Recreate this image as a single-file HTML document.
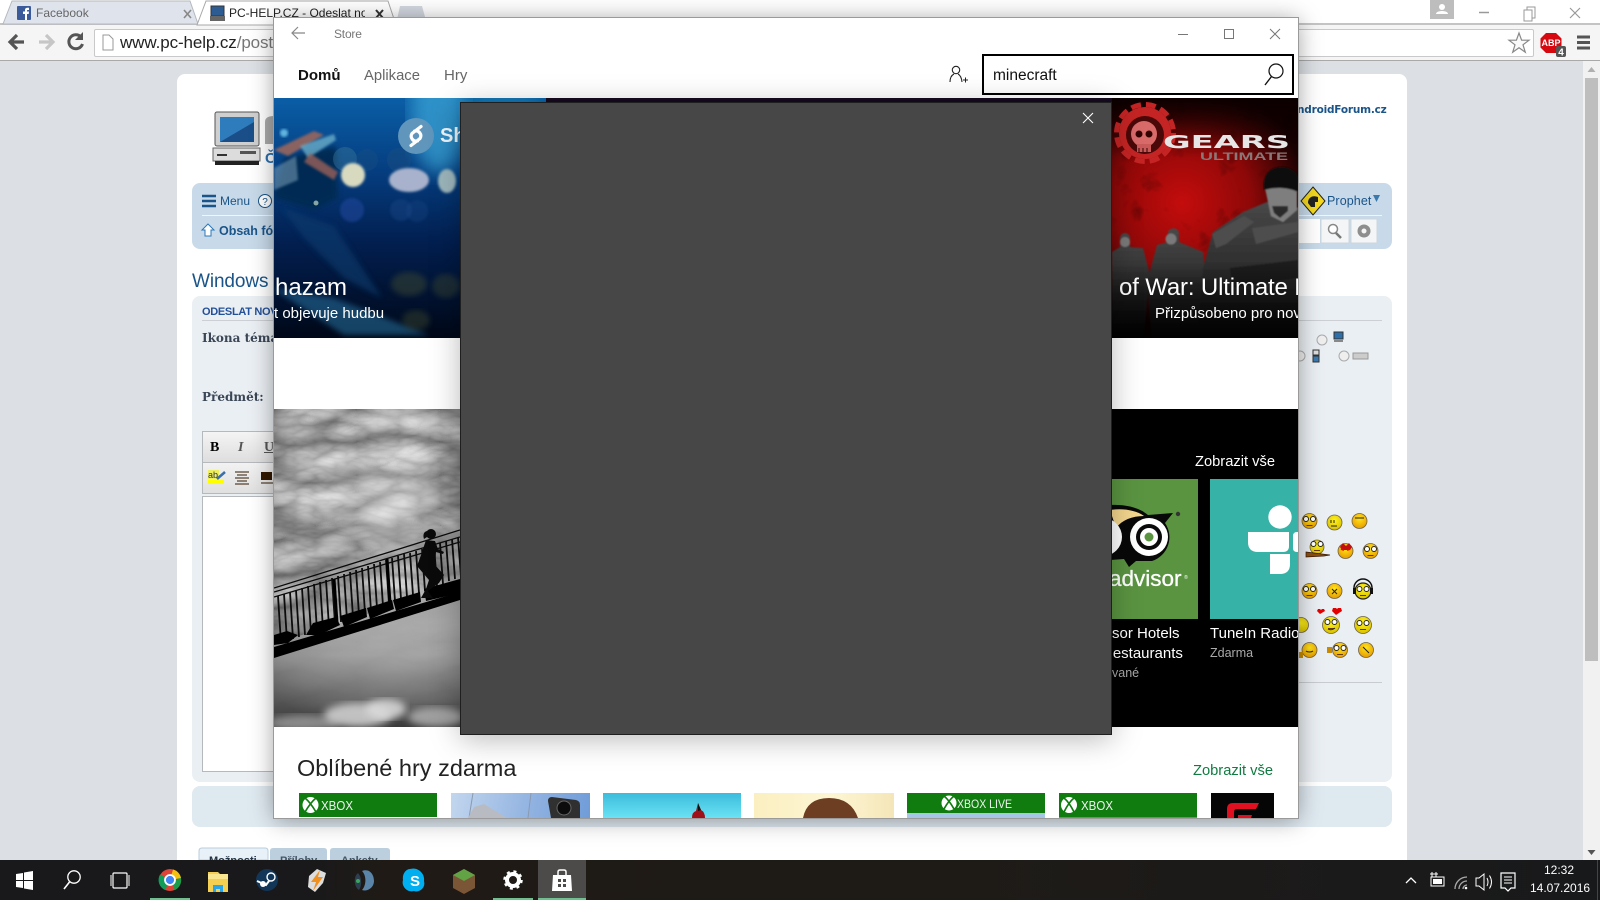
<!DOCTYPE html>
<html><head><meta charset="utf-8"><title>Store</title>
<style>
html,body{margin:0;padding:0;background:#dce0e4}
#r{position:relative;width:1600px;height:900px;overflow:hidden;background:#dce0e4;font-family:"Liberation Sans",sans-serif}
#r div,#r span.t{position:absolute}
.t{line-height:20px;white-space:nowrap}
svg{position:absolute;overflow:hidden}
.forum{color:#1a5488}
</style></head><body><div id="r">

<!-- chrome -->
<div style="left:0;top:0;width:1600px;height:24px;background:#fff"></div>
<div style="left:0;top:23px;width:1600px;height:2px;background:#c4c4c4"></div>
<div style="left:0;top:25px;width:1600px;height:35px;background:#f5f5f5"></div>
<div style="left:0;top:60px;width:1600px;height:1px;background:#a9a9a9"></div>
<svg style="left:0;top:0" width="440" height="26">
<path d="M3 24L12 1H190L198 24Z" fill="#dfe4ec" stroke="#b4b8be"/>
<path d="M197 25L206 1H388L396 25Z" fill="#fff" stroke="#a8a8a8"/>
<path d="M396 24L400 6H422L427 24Z" fill="#d3d8e0"/>
<rect x="17" y="6" width="14" height="14" rx="1" fill="#3b5a9a"/>
<path d="M25 20V14H23V11.500H25V10C25 8 26.500 7.500 29 7.800V10H27.500C27 10 27 10.500 27 11V11.500H29L28.700 14H27V20Z" fill="#fff"/>
<path d="M184 10l7 8M191 10l-7 8" stroke="#888" stroke-width="1.600"/>
<rect x="211" y="6" width="13" height="10" fill="#2c5c92" stroke="#333"/>
<rect x="210" y="16" width="15" height="5" fill="#666"/>
<path d="M376 10l7 8M383 10l-7 8" stroke="#333" stroke-width="2"/>
</svg>
<span class="t" style="left:36px;top:3px;font-size:12px;color:#666">Facebook</span>
<span class="t" style="left:229px;top:3px;font-size:12px;color:#222;width:136px;overflow:hidden">PC-HELP.CZ - Odeslat nov</span>

<svg style="left:1420px;top:0" width="180" height="24">
<rect x="10" y="0" width="24" height="19" fill="#bdbdbd"/>
<circle cx="22" cy="7" r="3" fill="#fff"/><path d="M16 14c0-4 12-4 12 0z" fill="#fff"/>
<path d="M59 12.500H69" stroke="#999" stroke-width="1.500"/>
<rect x="104" y="10" width="8" height="11" fill="none" stroke="#999"/><path d="M107 10V7H115V18H112" fill="none" stroke="#999"/>
<path d="M150 8l10 10M160 8l-10 10" stroke="#999" stroke-width="1.200"/>
</svg>
<div style="left:94px;top:29px;width:1438px;height:26px;background:#fff;border:1px solid #c9c9c9;border-radius:2px"></div>
<svg style="left:0;top:26px" width="125" height="32">
<path d="M24 16H11M17 9l-7 7 7 7" fill="none" stroke="#555" stroke-width="3.200"/>
<path d="M39 16H52M46 9l7 7-7 7" fill="none" stroke="#c6c6c6" stroke-width="3.200"/>
<path d="M81 11a7 7 0 1 0 1.500 7" fill="none" stroke="#555" stroke-width="3"/><path d="M83 6v8h-8z" fill="#555"/>
<path d="M103 9h6l4 4v11h-10z" fill="#fff" stroke="#999"/>
</svg>
<span class="t" style="left:120px;top:33px;font-size:17px;color:#222;letter-spacing:-.1px">www.pc-help.cz<span style="color:#777">/posti</span></span>
<svg style="left:1500px;top:28px" width="100" height="30">
<path d="M19 5l2.600 7.200H29l-6 4.600 2.300 7.400-6.300-4.500-6.300 4.500 2.300-7.400-6-4.600h7.400z" fill="#fafafa" stroke="#888" stroke-width="1.200"/>
<path d="M46 5h10l5.500 5.500v9L56 25H46l-5.500-5.500v-9z" fill="#d5090f"/>
<text x="51" y="18" font-family="Liberation Sans" font-size="9" font-weight="700" fill="#fff" text-anchor="middle">ABP</text>
<rect x="56" y="18" width="10" height="11" rx="2" fill="#555"/>
<text x="61" y="27.500" font-family="Liberation Sans" font-size="10" font-weight="700" fill="#fff" text-anchor="middle">4</text>
<path d="M77 9h13M77 14.500h13M77 20h13" stroke="#555" stroke-width="3"/>
</svg>

<!-- scrollbar -->
<div style="left:1583px;top:61px;width:17px;height:799px;background:#f1f1f1"></div>
<div style="left:1585px;top:78px;width:13px;height:583px;background:#bebebe"></div>
<svg style="left:1583px;top:61px" width="17" height="799">
<path d="M8.500 6l4 5h-8z" fill="#b0b0b0"/><path d="M4.500 789h8l-4 5z" fill="#555"/></svg>

<!-- forum -->
<div style="left:177px;top:74px;width:1230px;height:800px;background:#fff;border-radius:8px 8px 0 0"></div>
<svg style="left:212px;top:110px" width="62" height="56">
<rect x="3" y="2" width="44" height="34" rx="2" fill="#cfcfcf" stroke="#555"/>
<rect x="8" y="7" width="34" height="25" fill="#2f7cbc"/><path d="M8 32L42 12V32Z" fill="#1a4e88"/>
<rect x="1" y="38" width="47" height="13" fill="#dcdcdc" stroke="#666"/>
<rect x="3" y="51" width="44" height="4" fill="#222"/>
<rect x="5" y="44" width="10" height="2" fill="#333"/><rect x="28" y="41" width="16" height="3" fill="#555"/>
<path d="M53 34V12q0-6 9-6v28z" fill="#aaa"/>
<text x="53" y="53" font-family="Liberation Sans" font-size="15" font-weight="700" fill="#2a6fb0">Č</text>
</svg>
<div class="t forum" style="left:1297px;top:100px;font-size:10.500px;font-weight:700;font-family:'DejaVu Sans',sans-serif;letter-spacing:-.2px">ndroidForum.cz</div>

<div style="left:192px;top:183px;width:1200px;height:66px;background:#c8dae9;border-radius:8px"></div>
<div style="left:202px;top:215px;width:1180px;height:1px;background:#f2f6f9"></div>
<svg style="left:200px;top:190px" width="90" height="55">
<path d="M2 6h14M2 11h14M2 16h14" stroke="#1a5488" stroke-width="2.400"/>
<circle cx="65" cy="11" r="6.500" fill="#fff" stroke="#1a5488"/><text x="65" y="15" text-anchor="middle" font-size="10" fill="#1a5488" font-family="Liberation Sans">?</text>
<path d="M8 34l6 6h-3v6H5v-6H2z" fill="#fff" stroke="#2a78b8"/>
</svg>
<span class="t forum" style="left:220px;top:191px;font-size:12px">Menu</span>
<span class="t forum" style="left:219px;top:221px;font-size:12.500px;font-weight:700">Obsah fó</span>
<svg style="left:1300px;top:186px" width="90" height="60">
<path d="M13 1l12 14-12 14L1 15z" fill="#f4d820" stroke="#222"/>
<path d="M8 17c0-6 5-8 10-6v5h-3v5h-4z" fill="#222"/>
<path d="M73 9h7l-3.500 7z" fill="#3b78ad"/>
<rect x="21" y="33" width="28" height="24" fill="#f4f5f6" stroke="#ccd6de"/>
<rect x="51" y="33" width="26" height="24" fill="#f4f5f6" stroke="#ccd6de"/>
<circle cx="33" cy="43" r="4.500" fill="#fff" stroke="#888" stroke-width="1.500"/><path d="M36 47l5 5" stroke="#777" stroke-width="2.500"/>
<circle cx="64" cy="45" r="4.500" fill="none" stroke="#8e8e8e" stroke-width="4"/>
</svg>
<div style="left:1298px;top:219px;width:22px;height:24px;background:#fff"></div>
<span class="t forum" style="left:1327px;top:191px;font-size:12.500px;letter-spacing:.1px">Prophet</span>

<span class="t forum" style="left:192px;top:272px;font-size:19px;letter-spacing:-.1px">Windows</span>
<div style="left:192px;top:296px;width:1200px;height:486px;background:#eaeff3;border-radius:8px"></div>
<div style="left:202px;top:320px;width:1180px;height:1px;background:#ccd0d4"></div>
<span class="t" style="left:202px;top:302px;font-size:11px;font-weight:700;letter-spacing:-.3px;color:#23509a">ODESLAT NOV</span>
<span class="t" style="left:202px;top:328px;font-size:12px;font-weight:700;color:#3a4656;font-family:'DejaVu Serif',serif">Ikona téma</span>
<span class="t" style="left:202px;top:387px;font-size:12px;font-weight:700;color:#3a4656;font-family:'DejaVu Serif',serif">Předmět:</span>
<div style="left:202px;top:431px;width:80px;height:30px;background:linear-gradient(#f4f4f4,#dedede);border:1px solid #b5b9bd"></div>
<div style="left:202px;top:462px;width:80px;height:30px;background:linear-gradient(#f2f2f2,#e0e0e0);border:1px solid #b5b9bd"></div>
<div style="left:202px;top:496px;width:80px;height:274px;background:#fff;border:1px solid #b5b9bd"></div>
<span class="t" style="left:210px;top:438px;font-size:14px;font-weight:700;font-family:'Liberation Serif',serif;color:#000">B</span>
<span class="t" style="left:238px;top:438px;font-size:14px;font-weight:700;font-style:italic;font-family:'Liberation Serif',serif;color:#555">I</span>
<span class="t" style="left:264px;top:438px;font-size:14px;font-weight:700;text-decoration:underline;font-family:'Liberation Serif',serif;color:#555">U</span>
<svg style="left:205px;top:466px" width="76" height="24">
<rect x="3" y="4" width="11" height="9" fill="#eef060"/><rect x="3" y="14" width="16" height="4" fill="#ff0"/>
<text x="3" y="12" font-size="9" font-family="Liberation Sans" fill="#333">ab</text>
<path d="M12 13l8-7" stroke="#3c6ea8" stroke-width="2.500"/>
<path d="M30 6h14M32 9h10M30 12h14M32 15h10M30 18h14" stroke="#321800" stroke-width="1.100"/>
<rect x="56" y="6" width="11" height="8" fill="#321800"/><path d="M56 17h16M68 7h5M68 10h5M68 13h5" stroke="#321800"/>
</svg>

<!-- right column -->
<svg style="left:1298px;top:325px" width="90" height="45">
<circle cx="24" cy="15" r="5" fill="#eee" stroke="#aaa"/><rect x="36" y="7" width="9" height="7" fill="#2d6fa8" stroke="#333"/><path d="M36 15h9v2h-9z" fill="#888"/>
<circle cx="2" cy="31" r="5" fill="#eee" stroke="#aaa"/><rect x="15" y="25" width="6" height="5" fill="#ddd" stroke="#333"/><rect x="15" y="31" width="6" height="6" fill="#3a7ab0" stroke="#333"/>
<circle cx="46" cy="31" r="5" fill="#eee" stroke="#aaa"/><rect x="55" y="28" width="15" height="6" fill="#ccc" stroke="#999"/>
</svg>
<svg style="left:1290px;top:500px" width="110" height="170">
<defs><radialGradient id="y" cx=".5" cy=".35" r=".65"><stop offset="0" stop-color="#ffe51a"/><stop offset="1" stop-color="#e89b00"/></radialGradient>
<radialGradient id="y2" cx=".5" cy=".35" r=".65"><stop offset="0" stop-color="#fff21c"/><stop offset="1" stop-color="#d8c000"/></radialGradient>
<g id="ol"><circle cx="-3.500" cy="-2" r="2.500" fill="#fff" stroke="#222"/><circle cx="3.500" cy="-2" r="2.500" fill="#fff" stroke="#222"/><path d="M-3 4.500h6" stroke="#6a3b00"/></g></defs>
<g stroke="#6e6248" stroke-width=".8">
<circle cx="19.500" cy="21" r="7.500" fill="url(#y)"/><circle cx="44.500" cy="22.500" r="7.500" fill="url(#y2)"/><circle cx="69.500" cy="21" r="7.500" fill="url(#y)"/>
<circle cx="27" cy="47" r="7" fill="url(#y2)"/><circle cx="55.500" cy="51" r="7.500" fill="url(#y)"/><circle cx="80.500" cy="51" r="7.500" fill="url(#y)"/>
<circle cx="19.500" cy="91" r="7.500" fill="url(#y)"/><circle cx="44.500" cy="91" r="7.500" fill="url(#y)"/><circle cx="73" cy="91" r="8" fill="url(#y2)" stroke="#222" stroke-width="1.200"/>
<circle cx="11" cy="125" r="7.500" fill="url(#y2)"/><circle cx="41" cy="125" r="8.500" fill="url(#y2)"/><circle cx="73" cy="125" r="8.500" fill="url(#y2)"/>
<circle cx="19.500" cy="150" r="7.500" fill="url(#y)"/><circle cx="50" cy="150" r="7.500" fill="url(#y)"/><circle cx="76" cy="150" r="7.500" fill="url(#y)"/>
</g>
<use href="#ol" x="19.500" y="21"/><use href="#ol" x="80.500" y="51"/><use href="#ol" x="19.500" y="91"/><use href="#ol" x="73" y="91"/><use href="#ol" x="73" y="125"/><use href="#ol" x="27" y="46"/><use href="#ol" x="41" y="124"/><use href="#ol" x="50" y="150"/>
<path d="M65 18h9M44 20v3M41 20v3M41 26h6M38 129q3 2 7-1M16 151a4 2 0 0 0 7 0M73 147l6 6M42 89l5 5M47 89l-5 5" stroke="#222" fill="none"/>
<path d="M16 52l24 3-6 1-18 1z" fill="#8c4e10" stroke="#3a1a00" stroke-width=".7"/>
<path d="M50 47l3-4 3 3 3-3 3 4-2 3h-8z" fill="#c01010"/><path d="M51 49l3 1M60 49l-3 1" stroke="#e00" stroke-width="1.800"/>
<path d="M64 88a9 9 0 0 1 18 0" fill="none" stroke="#111" stroke-width="1.500"/><rect x="63" y="88" width="3" height="6" fill="#111"/><rect x="80" y="88" width="3" height="6" fill="#111"/>
<path d="M30 114l-3-3 1-2h2l1 1 1-1h2l1 2zM46 115l-4-4 1-3h3l1 1 1-1h3l1 3z" fill="#e50000"/>
<rect x="9" y="152" width="4" height="6" fill="#c88a00"/><rect x="37" y="147" width="5" height="6" fill="#c88a00"/>
</svg>
<div style="left:1298px;top:682px;width:84px;height:1px;background:#c8ccd0"></div>

<div style="left:192px;top:786px;width:1200px;height:41px;background:#dfe9f0;border-radius:8px"></div>
<svg style="left:195px;top:845px" width="205" height="15">
<path d="M4 15V6q0-3 3-3h63q3 0 3 3v9z" fill="#e8f1f8" stroke="#b9cddc"/>
<path d="M75 15V6q0-3 3-3h51q3 0 3 3v9z" fill="#bccfde"/>
<path d="M135 15V6q0-3 3-3h54q3 0 3 3v9z" fill="#bccfde"/>
</svg>
<span class="t forum" style="left:209px;top:851px;font-size:11px;font-weight:700;color:#234">Možnosti</span>
<span class="t" style="left:280px;top:851px;font-size:11px;font-weight:700;color:#456">Přílohy</span>
<span class="t" style="left:341px;top:851px;font-size:11px;font-weight:700;color:#456">Ankety</span>

<!-- store window -->
<div id="w" style="left:274px;top:18px;width:1024px;height:800px;background:#fff;box-shadow:0 2px 22px rgba(0,0,0,.38);overflow:hidden;outline:1px solid #9a9a9a">
<svg style="left:0;top:0" width="1024" height="80">
<path d="M31 15H18M24 9l-6 6 6 6" fill="none" stroke="#888" stroke-width="1.200"/>
<path d="M904 16.500h10" stroke="#777"/>
<rect x="950.500" y="11.500" width="9" height="9" fill="none" stroke="#777"/>
<path d="M996 11l10 10M1006 11l-10 10" stroke="#777"/>
<circle cx="682" cy="52" r="3.700" fill="none" stroke="#222" stroke-width="1.100"/>
<path d="M676 64c0-5 2-7 4-8M688 64c-.5-5-2-7-4-8" fill="none" stroke="#222" stroke-width="1.100"/>
<path d="M689 62h5M691.500 59.500v5" stroke="#222"/>
</svg>
<span class="t" style="left:60px;top:6px;font-size:12px;color:#777;letter-spacing:-.2px">Store</span>
<span class="t" style="left:24px;top:48px;font-size:15px;font-weight:700;color:#111">Domů</span>
<span class="t" style="left:90px;top:48px;font-size:14.800px;color:#666">Aplikace</span>
<span class="t" style="left:170px;top:48px;font-size:15px;color:#666">Hry</span>
<div style="left:708px;top:36px;width:308px;height:37px;border:2px solid #000;background:#fff"></div>
<span class="t" style="left:719px;top:48px;font-size:15.500px;color:#111">minecraft</span>
<svg style="left:989px;top:43px" width="24" height="28">
<circle cx="13" cy="10" r="7" fill="none" stroke="#111" stroke-width="1.200"/><path d="M8.500 15.500L2 24" stroke="#111" stroke-width="1.400"/></svg>

<!-- shazam hero -->
<div style="left:0;top:80px;width:272px;height:240px;overflow:hidden">
<svg style="left:0;top:0" width="272" height="240">
<defs>
<linearGradient id="hb" x1="0" y1="0" x2="0" y2="1"><stop offset="0" stop-color="#0a5ea6"/><stop offset=".3" stop-color="#053e80"/><stop offset=".6" stop-color="#021f50"/><stop offset="1" stop-color="#000818"/></linearGradient>
<filter id="b1"><feGaussianBlur stdDeviation="1.300"/></filter>
<filter id="b2"><feGaussianBlur stdDeviation="3"/></filter>
<filter id="b6"><feGaussianBlur stdDeviation="9"/></filter>
</defs>
<rect width="272" height="240" fill="url(#hb)"/>
<ellipse cx="165" cy="15" rx="28" ry="60" fill="#3aa4d6" opacity=".75" filter="url(#b6)"/>
<ellipse cx="230" cy="10" rx="40" ry="22" fill="#1b8cc4" opacity=".6" filter="url(#b6)"/>
<path d="M10 60L62 48 64 100 40 112 0 100Z" fill="#062b52" filter="url(#b2)"/>
<path d="M0 70L22 58 24 82 0 92Z" fill="#7aa0b8" opacity=".55" filter="url(#b1)"/>
<path d="M0 52L40 33 50 37 14 58Z" fill="#a2685a" opacity=".85" filter="url(#b1)"/>
<path d="M26 48L60 36 62 42 34 60Z" fill="#70b4cc" opacity=".75" filter="url(#b1)"/>
<path d="M36 55L64 74 60 82 30 64Z" fill="#9a6058" opacity=".8" filter="url(#b1)"/>
<circle cx="10" cy="35" r="4" fill="#60b4e0" filter="url(#b1)"/>
<circle cx="42" cy="105" r="2.500" fill="#a8c4b8" opacity=".8"/>
<path d="M8 110L60 128 108 200 70 180 30 140Z" fill="#0c3c70" opacity=".6" filter="url(#b2)"/>
<path d="M-2 190L60 200 155 237H70Z" fill="#2a7cac" opacity=".5" filter="url(#b2)"/>
<circle cx="71" cy="61" r="12" fill="#3f7c9a" opacity=".4"/>
<circle cx="93" cy="62" r="11" fill="#1e5080" opacity=".35"/>
<circle cx="125" cy="62" r="12" fill="#1e5080" opacity=".4"/>
<circle cx="78" cy="112" r="12" fill="#2248a0" opacity=".55" filter="url(#b1)"/>
<circle cx="127" cy="112" r="11" fill="#1c4888" opacity=".4" filter="url(#b1)"/>
<circle cx="143" cy="113" r="11" fill="#1c4888" opacity=".3" filter="url(#b1)"/>
<circle cx="79" cy="77" r="12" fill="#d8dac0" filter="url(#b1)"/>
<ellipse cx="135" cy="82" rx="20" ry="12" fill="#a8b2cc" filter="url(#b1)"/>
<ellipse cx="173" cy="83" rx="9" ry="12" fill="#9cb6bc" filter="url(#b1)"/>
<ellipse cx="135" cy="186" rx="18" ry="12" fill="#4c5630" opacity=".4" filter="url(#b2)"/>
<ellipse cx="172" cy="188" rx="14" ry="12" fill="#4c5630" opacity=".35" filter="url(#b2)"/>
<ellipse cx="142" cy="222" rx="14" ry="10" fill="#4c5630" opacity=".35" filter="url(#b2)"/>
<circle cx="142" cy="38" r="18" fill="#6096bc"/>
<path d="M147 28.500l-9 7a5 5 0 0 0 5.500 7.500M137 47.500l9-7a5 5 0 0 0-5.500-7.500" fill="none" stroke="#fff" stroke-width="3.200" stroke-linecap="round"/>
</svg>
<span class="t" style="left:166px;top:28px;font-size:20px;font-weight:700;color:#eef6fa">Sh</span>
<span class="t" style="left:-15px;top:180px;font-size:24px;color:#fff">Shazam</span>
<span class="t" style="left:0;top:206px;font-size:15px;color:#fff">t objevuje hudbu</span>
</div>
<div style="left:272px;top:80px;width:566px;height:4px;background:#170a20"></div>

<!-- gears hero -->
<div style="left:838px;top:80px;width:186px;height:240px;overflow:hidden;background:#000">
<svg style="left:0;top:0" width="186" height="240">
<defs>
<radialGradient id="gr" gradientUnits="userSpaceOnUse" cx="70" cy="105" r="125"><stop offset="0" stop-color="#c40c0c"/><stop offset=".55" stop-color="#8e0808"/><stop offset="1" stop-color="#1a0101"/></radialGradient>
<linearGradient id="gf" x1="0" y1="0" x2="0" y2="1"><stop offset="0" stop-color="#000" stop-opacity="0"/><stop offset="1" stop-color="#000" stop-opacity=".92"/></linearGradient>
<linearGradient id="gt" x1="0" y1="0" x2="0" y2="1"><stop offset="0" stop-color="#0a0000" stop-opacity=".95"/><stop offset="1" stop-color="#0a0000" stop-opacity="0"/></linearGradient>
<filter id="tb" x="0" y="0" width="100%" height="100%" color-interpolation-filters="sRGB"><feTurbulence baseFrequency=".03" numOctaves="3" seed="7"/><feColorMatrix values="0 0 0 0 0 0 0 0 0 0 0 0 0 0 0 2 0 0 0 -.8"/></filter>
<linearGradient id="sb" x1="0" y1="0" x2="0" y2="1"><stop offset="0" stop-color="#484848"/><stop offset=".6" stop-color="#262626"/><stop offset="1" stop-color="#111"/></linearGradient>
<filter id="bs"><feGaussianBlur stdDeviation=".7"/></filter>
</defs>
<rect width="186" height="240" fill="url(#gr)"/>
<rect width="186" height="160" filter="url(#tb)" opacity=".45"/>
<rect width="186" height="60" fill="url(#gt)"/>
<circle cx="33" cy="35" r="26" fill="#c42424"/>
<circle cx="33" cy="35" r="28.500" fill="none" stroke="#c42424" stroke-width="5" stroke-dasharray="10 5"/>
<circle cx="33" cy="37" r="19" fill="#4a0808"/>
<ellipse cx="32" cy="36" rx="13" ry="13" fill="#d86a6a"/>
<rect x="25" y="46" width="14" height="8" fill="#c85a5a"/>
<circle cx="27" cy="36" r="3.500" fill="#300"/><circle cx="37" cy="36" r="3.500" fill="#300"/>
<path d="M27 50v4M31 50v4M35 50v4" stroke="#300"/>
<g filter="url(#bs)">
<path d="M0 154l8-5v-9a5 5 0 0 1 10 0v9l13 1 7 27-7 65H0z" fill="url(#sb)"/>
<path d="M35 184l10-37 11-3v-10a6 6 0 0 1 11 0v10l24 10 4 43-4 45H40z" fill="url(#sb)"/>
<path d="M91 170l10-36 30-20 24-10 33 6v132H85z" fill="url(#sb)"/>
<path d="M100 136l32-18 10 6-28 22-10 4zM140 130l46-6v10l-42 12z" fill="#4e4e4e"/>
<path d="M118 170l68-8v18l-66 10z" fill="#1d1d1d"/>
<path d="M153 90l32 0v22l-14 12-12-6z" fill="#7e7e7e"/>
<path d="M160 108h16v5l-8 7-6-5z" fill="#2a2a2a"/>
<path d="M152 92c-2-18 8-23 18-23s16 7 16 10v15c-10-5-24-5-34-2z" fill="#0c0c0c"/>
<circle cx="59" cy="141" r="5.500" fill="#7a7a7a"/><circle cx="13" cy="144" r="5" fill="#7a7a7a"/>
</g>
<rect y="165" width="186" height="75" fill="url(#gf)"/>
<text x="51" y="50" font-family="DejaVu Sans" font-weight="700" font-size="18" fill="#e6e6e6" textLength="127" lengthAdjust="spacingAndGlyphs">GEARS</text>
<text x="88" y="62" font-family="Liberation Sans" font-weight="700" font-size="11" fill="#8a7878" textLength="88" lengthAdjust="spacingAndGlyphs">ULTIMATE</text>
</svg>
<span class="t" style="left:7px;top:180px;font-size:24px;letter-spacing:-.15px;color:#fff">of War: Ultimate E</span>
<span class="t" style="left:43px;top:206px;font-size:15px;color:#fff">Přizpůsobeno pro nov</span>
</div>

<!-- cloud image -->
<div style="left:0;top:391px;width:186px;height:318px;overflow:hidden;background:#777">
<svg style="left:0;top:0" width="186" height="318">
<defs>
<radialGradient id="cg" gradientUnits="userSpaceOnUse" cx="112" cy="100" r="220"><stop offset="0" stop-color="#fff" stop-opacity=".5"/><stop offset=".35" stop-color="#ccc" stop-opacity=".15"/><stop offset="1" stop-color="#000" stop-opacity=".4"/></radialGradient>
<filter id="cl" x="0" y="0" width="100%" height="100%" color-interpolation-filters="sRGB"><feTurbulence baseFrequency=".012 .03" numOctaves="4" seed="11"/><feColorMatrix values=".7 0 0 0 .34 .7 0 0 0 .34 .7 0 0 0 .34 0 0 0 0 1"/></filter>
<filter id="b4"><feGaussianBlur stdDeviation="4"/></filter>
<linearGradient id="lw" x1="0" y1="0" x2="0" y2="1"><stop offset="0" stop-color="#a0a0a0"/><stop offset=".5" stop-color="#bcbcbc"/><stop offset=".82" stop-color="#8c8c8c"/><stop offset="1" stop-color="#5c5c5c"/></linearGradient>
</defs>
<rect width="186" height="318" filter="url(#cl)"/>
<path d="M0 235L186 175V318H0Z" fill="url(#lw)" opacity=".92"/>
<rect width="186" height="318" fill="url(#cg)"/>
<ellipse cx="30" cy="314" rx="36" ry="8" fill="#aaa" opacity=".7" filter="url(#b4)"/>
<ellipse cx="84" cy="306" rx="34" ry="12" fill="#d6d6d6" opacity=".85" filter="url(#b4)"/>
<ellipse cx="112" cy="300" rx="20" ry="10" fill="#dcdcdc" opacity=".85" filter="url(#b4)"/>
<ellipse cx="162" cy="308" rx="28" ry="10" fill="#bcbcbc" opacity=".75" filter="url(#b4)"/>
<path d="M0 179L186 121M0 183L186 128M0 188L186 133" stroke="#0a0a0a" stroke-width="1.300" fill="none"/>
<path d="M4 187l3 47M10 185l3 47M16 183l3 47M22 181l3 47M28 179l3 47M34 177l3 47M40 175l3 47M46 173l3 47M52 171l3 47M58 169l3 46M64 167l3 46M70 165l3 46M76 163l3 45M82 161l3 45M88 159l3 45M94 157l3 45M100 155l3 44M106 153l3 44M112 151l3 44M118 149l3 43M124 147l3 43M130 145l3 43M136 144l3 42M142 142l3 42M148 140l3 42M154 138l3 41M160 136l3 41M166 134l3 41M172 132l3 40M178 130l3 40M184 128l3 40" stroke="#0c0c0c" stroke-width="1.800" fill="none"/>
<path d="M60 170l3 44M113 150l3 44" stroke="#000" stroke-width="3"/>
<path d="M0 238L186 183V191L0 249Z" fill="#000"/>
<path d="M0 226L13 222 24 226 14 234 0 236ZM39 214L62 208 66 216 45 226 32 226ZM66 207L92 199 93 208 70 218ZM93 199L118 191 120 200 96 210ZM119 191L146 183 147 193 122 202ZM150 180L186 170V184L152 192Z" fill="#000"/>
<circle cx="157" cy="125" r="5" fill="#0a0a0a"/>
<path d="M153 122c-4 1-4 5-3 8l3-2z" fill="#0a0a0a"/>
<path d="M152 131l9 1 3 8 6 3-1 2-7-2-1 13 9 10-5 8-11 8 5 7h-12l5-9 3-9-6-7-6-7 4-11z" fill="#0a0a0a"/>
</svg>
</div>

<!-- black panel -->
<div style="left:838px;top:391px;width:186px;height:318px;background:#000;overflow:hidden"></div>
<div style="left:921px;top:434px;color:#fff;font-size:14.700px;line-height:20px;white-space:nowrap">Zobrazit vše</div>
<div style="left:838px;top:461px;width:86px;height:140px;background:#5a9441;overflow:hidden">
<svg width="86" height="140" style="left:0;top:0">
<path d="M-2 26c16-1 30 3 38 10l25-2-8 10a25 25 0 0 1-13 38l-16 0-7 6-5-8-14 1z" fill="#080808"/>
<path d="M-2 31c12-2 26 0 34 6-12 0-22 4-28 12z" fill="#f4d68e"/>
<circle cx="37" cy="58" r="19" fill="#fff"/><circle cx="37" cy="58" r="13" fill="#0a0a0a"/><circle cx="37" cy="58" r="9" fill="#fff"/><circle cx="37" cy="58" r="4.500" fill="#5a9441"/>
<circle cx="-9" cy="58" r="19" fill="#fff"/>
<circle cx="66" cy="35" r="2.200" fill="#333"/>
<text x="74" y="100" font-family="Liberation Sans" font-size="5" fill="#fff" text-anchor="middle">®</text>
<text x="-3" y="107" font-family="Liberation Sans" font-size="22.500" fill="#fff" stroke="#fff" stroke-width=".3">advisor</text>
</svg>
</div>
<div style="left:936px;top:461px;width:88px;height:140px;background:#37b2a6;overflow:hidden">
<svg width="88" height="140" style="left:0;top:0">
<circle cx="70" cy="38" r="11.700" fill="#fff"/>
<path d="M38 53h41v14q0 6-6 6H48q-10 0-10-10z" fill="#fff"/>
<path d="M90 53h-3q-4 0-4 4v12q0 4 4 4h3z" fill="#fff"/>
<path d="M60 75h20v10q0 10-10 10H60z" fill="#fff"/>
</svg>
</div>
<span class="t" style="left:838px;top:606px;font-size:15px;color:#fff">sor Hotels</span>
<span class="t" style="left:828px;top:626px;font-size:15px;color:#fff">Restaurants</span>
<span class="t" style="left:838px;top:645px;font-size:12.500px;color:#aaa">vané</span>
<span class="t" style="left:936px;top:606px;font-size:15px;color:#fff;width:88px;overflow:hidden">TuneIn Radio</span>
<span class="t" style="left:936px;top:625px;font-size:12.500px;color:#aaa">Zdarma</span>

<!-- bottom row -->
<span class="t" style="left:23px;top:740px;font-size:23.500px;color:#222">Oblíbené hry zdarma</span>
<span class="t" style="left:919px;top:743px;font-size:14.700px;color:#107c41">Zobrazit vše</span>
<div style="left:25px;top:775px;width:138px;height:24px;background:#107c10"></div>
<div style="left:177px;top:775px;width:139px;height:25px;background:linear-gradient(100deg,#c2d6ee,#8fb1e0 60%,#6f9cd8);overflow:hidden"><svg width="139" height="25" style="left:0;top:0"><path d="M22 0l-4 25M80 0l-3 25" stroke="#8a9ab0"/><path d="M17 25l6-11 10-3 8 5 15 9z" fill="#b8bcc2"/><path d="M97 8q0-4 4-4l24 3q4 1 4 5v13H100z" fill="#303030"/><circle cx="113" cy="15" r="7" fill="#0c0c0c" stroke="#666"/></svg></div>
<div style="left:329px;top:775px;width:138px;height:25px;background:linear-gradient(#3cbcdc,#6ae2f4);overflow:hidden"><svg width="138" height="25" style="left:0;top:0"><path d="M89 25q0-6 4-7l2-8 3 7q4 2 4 8z" fill="#a01018"/><path d="M95 10l3 7-3 1z" fill="#111"/></svg></div>
<div style="left:480px;top:775px;width:140px;height:25px;background:linear-gradient(90deg,#fbefc0,#fdf6d4 55%,#f5e6b8);overflow:hidden"><svg width="140" height="25" style="left:0;top:0"><path d="M49 25q4-20 26-20t29 20z" fill="#6e3e22"/></svg></div>
<div style="left:633px;top:775px;width:138px;height:25px;background:#a6c6e6"><div style="left:0;top:0;width:138px;height:20px;background:#107c10"></div></div>
<div style="left:785px;top:775px;width:138px;height:25px;background:#38a0a0"><div style="left:0;top:0;width:138px;height:24px;background:#107c10"></div></div>
<div style="left:937px;top:775px;width:63px;height:25px;background:#050505;overflow:hidden"><svg width="63" height="25" style="left:0;top:0"><path d="M16 25V16q0-6 6-6h26l-3 6H26q-3 0-3 3v6zM27 22h14l-1 3H27z" fill="#e01020"/></svg></div>
<svg style="left:0;top:770px" width="1024" height="30">
<g fill="#fff">
<circle cx="36.500" cy="17" r="8"/><circle cx="675" cy="15" r="7.500"/><circle cx="795" cy="17" r="8"/>
</g>
<g stroke="#107c10" stroke-width="1.700" fill="none"><path d="M31 10q5 4 11 14M42 10q-5 4-11 14M670 8q5 4 10 13M680 8q-5 4-10 13M790 10q5 4 10 14M800 10q-5 4-10 14"/></g>
<text x="47" y="22" font-family="Liberation Sans" font-size="13" fill="#eef5ee" textLength="32" lengthAdjust="spacingAndGlyphs">XBOX</text>
<text x="683" y="20" font-family="Liberation Sans" font-size="12" fill="#eef5ee" textLength="55" lengthAdjust="spacingAndGlyphs">XBOX LIVE</text>
<text x="807" y="22" font-family="Liberation Sans" font-size="13" fill="#eef5ee" textLength="32" lengthAdjust="spacingAndGlyphs">XBOX</text>
</svg>
</div>

<!-- modal -->
<div style="left:460px;top:102px;width:650px;height:631px;background:#474747;border:1px solid #1f1f1f;box-shadow:0 4px 28px rgba(0,0,0,.28)"></div>
<svg style="left:1080px;top:110px" width="16" height="16"><path d="M3 3l10 10M13 3L3 13" stroke="#fff" stroke-width="1.100"/></svg>

<!-- taskbar -->
<div style="left:0;top:860px;width:1600px;height:40px;background:linear-gradient(90deg,#19191b 0,#19191b 19%,#1f1a15 24%,#1e1b17 60%,#1b1a1a 85%,#18191b 100%)"></div>
<div style="left:538px;top:860px;width:48px;height:40px;background:#4c4b49"></div>
<div style="left:150px;top:898px;width:40px;height:2px;background:#6fc08e"></div>
<div style="left:493px;top:898px;width:40px;height:2px;background:#6fc08e"></div>
<div style="left:538px;top:898px;width:48px;height:2px;background:#6fc08e"></div>
<svg style="left:0;top:860px" width="600" height="40">
<path d="M16 14l7-1v7h-7zM24 12.500l9-1.500v9h-9zM16 21h7v7l-7-1zM24 21h9v9l-9-1.500z" fill="#fff"/>
<circle cx="74" cy="17" r="6.200" fill="none" stroke="#fff" stroke-width="1.300"/><path d="M69.500 22L64 29" stroke="#fff" stroke-width="1.600"/>
<rect x="113" y="13" width="14" height="15" rx="1" fill="none" stroke="#fff" stroke-width="1.200"/><path d="M111 15v11M129 15v11" stroke="#fff"/>
<circle cx="170" cy="20" r="11" fill="#db4437"/><path d="M170 20L160 14.500A11 11 0 0 0 165 30z" fill="#0f9d58"/><path d="M170 20L175 30A11 11 0 0 0 181 18z" fill="#1e9b4a"/><path d="M170 20L181 18A11 11 0 0 0 173 9.500z" fill="#f4c20d"/>
<circle cx="170" cy="20" r="5" fill="#4285f4" stroke="#fff" stroke-width="1.800"/>
<path d="M208 12h10l2 2h8v18h-20z" fill="#f5d050"/><rect x="208" y="14" width="20" height="5" fill="#fbe690"/><path d="M213 25h10v7h-3v-3h-4v3h-3z" fill="#2aa5e8"/>
<circle cx="267" cy="20" r="11" fill="#123658"/><circle cx="271" cy="17" r="4" fill="none" stroke="#fff" stroke-width="1.400"/><path d="M257 21l9 4 3-4" fill="none" stroke="#fff" stroke-width="2"/><circle cx="263" cy="24" r="3" fill="#fff"/>
<path d="M309 16l8-7 9 4-3 10-8 9-7-5z" fill="#ddd"/><path d="M320 10l-9 12h5l-3 9 10-14h-5z" fill="#f09020"/>
<path d="M362 11c8-3 12 4 12 10s-6 11-12 9c4-4 5-14 0-19z" fill="#5b85a8"/><path d="M358 13c4 4 4 13 1 17-5-3-6-13-1-17z" fill="#2c3e50"/><circle cx="358" cy="21" r="2" fill="#3aa65c"/>
<path d="M410 9a11 11 0 0 1 14 12c2 7-5 12-10 10-7 2-13-5-11-11-1-6 3-11 7-11z" fill="#00aff0"/><text x="415" y="26" text-anchor="middle" font-size="15" font-weight="700" fill="#fff" font-family="Liberation Sans">S</text>
<path d="M464 9l11 6v13l-11 6-11-6V15z" fill="#7a5637"/><path d="M464 9l11 6-11 6-11-6z" fill="#62a345"/>
<circle cx="513" cy="20" r="6" fill="none" stroke="#fff" stroke-width="4"/><circle cx="513" cy="20" r="8.500" fill="none" stroke="#fff" stroke-width="2.500" stroke-dasharray="3 3.700"/>
<path d="M553 15h18l1 16h-20z" fill="#fff"/><path d="M558 15v-3q0-2 2-2h4q2 0 2 2v3" fill="none" stroke="#fff" stroke-width="1.500"/><path d="M558 19h3v3h-3zM563 19h3v3h-3zM558 24h3v3h-3zM563 24h3v3h-3z" fill="#4c4b49"/>
</svg>
<svg style="left:1400px;top:860px" width="130" height="40">
<path d="M6 23l5-5 5 5" fill="none" stroke="#fff" stroke-width="1.300"/>
<rect x="31" y="17" width="13" height="9" fill="none" stroke="#fff"/><rect x="33" y="19" width="9" height="5" fill="#fff"/><path d="M32 17V12M36 17V12M30 14h8" stroke="#fff"/>
<path d="M55 29a12 12 0 0 1 12-12M59 29a8 8 0 0 1 8-8M63 29a4 4 0 0 1 4-4" fill="none" stroke="#aaa" stroke-width="1.300"/><circle cx="66" cy="28" r="1.300" fill="#fff"/>
<path d="M76 18h3l5-4v16l-5-4h-3z" fill="none" stroke="#fff"/><path d="M87 18q2 4 0 8M89.500 15.500q4 6.500 0 13" fill="none" stroke="#fff"/>
<path d="M101 13h14v15h-4l-3 3-3-3h-4z" fill="none" stroke="#fff" stroke-width="1.200"/><path d="M104 17h8M104 20h8M104 23h8" stroke="#fff"/>
</svg>
<span class="t" style="left:1544px;top:860px;font-size:12px;color:#fff">12:32</span>
<span class="t" style="left:1530px;top:878px;font-size:12px;color:#fff">14.07.2016</span>
<div style="left:1597px;top:860px;width:1px;height:40px;background:#444"></div>
</div></body></html>
